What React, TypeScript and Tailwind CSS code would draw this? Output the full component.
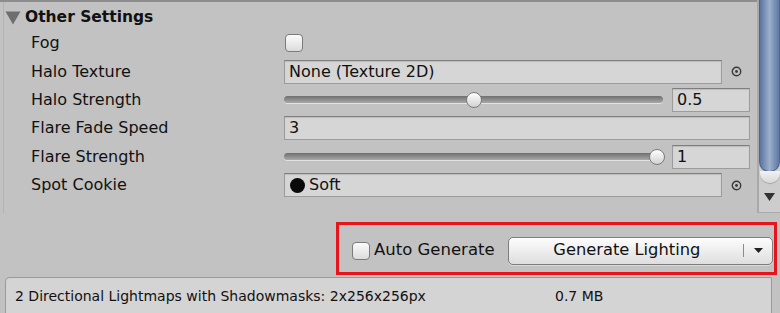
import React from "react";

const font = { fontFamily: '"DejaVu Sans", "Liberation Sans", sans-serif' };

function Field({ children, className = "" }: { children?: React.ReactNode; className?: string }) {
  return (
    <div
      className={
        "h-[24px] flex items-center pl-[4px] bg-[#d6d6d6] border border-[#9c9c9c] border-t-[#7e7e7e] shadow-[inset_0_1px_1px_rgba(0,0,0,0.12)] text-[16px] text-[#111] " +
        className
      }
    >
      {children}
    </div>
  );
}

function Picker() {
  return (
    <div className="w-[28px] flex items-center justify-center">
      <svg width="11" height="11" viewBox="0 0 11 11">
        <circle cx="5.5" cy="5.5" r="4.2" fill="none" stroke="#3a3a3a" strokeWidth="1.4" />
        <circle cx="5.5" cy="5.5" r="1.4" fill="#3a3a3a" />
      </svg>
    </div>
  );
}

function Slider({ pos, value }: { pos: number; value: string }) {
  return (
    <div className="flex items-center flex-1">
      <div className="relative w-[379px] h-[24px] flex items-center">
        <div className="w-full h-[7px] rounded-full bg-gradient-to-b from-[#6f6f6f] to-[#a9a9a9] shadow-[0_1px_0_#e2e2e2]" />
        <div
          className="absolute top-[4px] w-[16px] h-[16px] rounded-full border border-[#7a7a7a] bg-gradient-to-b from-[#ffffff] to-[#d2d2d2]"
          style={{ left: pos - 8 }}
        />
      </div>
      <Field className="ml-[9px] w-[78px]">{value}</Field>
    </div>
  );
}

function Checkbox({ className = "" }: { className?: string }) {
  return (
    <div
      className={
        "w-[18px] h-[18px] rounded-[4px] border border-[#7b7b7b] bg-gradient-to-b from-[#fbfbfb] to-[#dcdcdc] " + className
      }
    />
  );
}

function Row({ label, children }: { label: string; children: React.ReactNode }) {
  return (
    <div className="h-[28.4px] flex items-center">
      <div className="w-[280px] pl-[27px] text-[16px] text-[#111]">{label}</div>
      <div className="flex-1 flex items-center">{children}</div>
    </div>
  );
}

export default function App() {
  return (
    <div className="w-[780px] h-[313px] bg-[#c2c2c2] overflow-hidden relative" style={font}>
      <div className="flex h-[213px] border-t-2 border-[#8d8d8d]">
        <div className="flex-1 pr-[7px] border-l border-[#b3b3b3] ml-[3px]">
          <div className="h-[27px] flex items-center pt-[4px]">
            <svg width="16" height="15" viewBox="0 0 16 15" className="ml-[1px] mr-[4px]">
              <polygon points="0.5,1.5 15.5,1.5 8,14.5" fill="#6e6e6e" />
            </svg>
            <span className="font-bold text-[15.5px] text-[#111]">Other Settings</span>
          </div>
          <Row label="Fog">
            <Checkbox className="ml-[1px]" />
          </Row>
          <Row label="Halo Texture">
            <Field className="w-[438px]">None (Texture 2D)</Field>
            <Picker />
          </Row>
          <Row label="Halo Strength">
            <Slider pos={190} value="0.5" />
          </Row>
          <Row label="Flare Fade Speed">
            <Field className="flex-1">3</Field>
          </Row>
          <Row label="Flare Strength">
            <Slider pos={373} value="1" />
          </Row>
          <Row label="Spot Cookie">
            <Field className="w-[438px] pl-[5px]">
              <span className="w-[15px] h-[15px] rounded-full bg-[#0a0a0a] mr-[4px] inline-block" />
              Soft
            </Field>
            <Picker />
          </Row>
        </div>
        <div className="w-[24px] border-l-2 border-[#a9a9a9] bg-[#cdcdcd] flex flex-col items-center -mt-[2px]">
          <div className="w-[21px] h-[172px] rounded-b-[10px] bg-gradient-to-r from-[#5b74a0] via-[#9cb0cc] to-[#5f78a3] border border-[#4f6690] border-t-0" />
          <div className="w-[20px] h-[12px] -mt-[1px] rounded-b-[10px] bg-gradient-to-b from-[#f2f2f2] to-[#d8d8d8] shadow-[0_1px_1px_rgba(0,0,0,0.2)]" />
          <div className="mt-[10px]">
            <svg width="11" height="8" viewBox="0 0 11 8">
              <polygon points="0,0 11,0 5.5,8" fill="#333" />
            </svg>
          </div>
          <div className="flex-1" />
          <div className="w-full h-px bg-[#a9a9a9]" />
        </div>
      </div>

      <div className="flex justify-end mt-[9px] pr-[3px]">
        <div className="w-[441px] h-[53px] border-[3px] border-[#e8141b] flex items-center pt-[4px] pr-[1px]">
          <Checkbox className="ml-[13px]" />
          <span className="ml-[4px] text-[16.5px] text-[#111]">Auto Generate</span>
          <div className="ml-[13px] flex-1 h-[28px] rounded-[5px] border border-[#7d7d7d] bg-gradient-to-b from-[#fdfdfd] to-[#dedede] flex items-center shadow-[0_1px_0_rgba(255,255,255,0.4)]">
            <span className="flex-1 text-center text-[16.3px] text-[#111] pl-[2px]">Generate Lighting</span>
            <div className="w-px h-[13px] bg-[#8a8a8a]" />
            <div className="w-[28px] flex justify-center">
              <svg width="9" height="5" viewBox="0 0 9 5">
                <polygon points="0,0 9,0 4.5,5" fill="#222" />
              </svg>
            </div>
          </div>
        </div>
      </div>

      <div className="ml-[5px] mr-[8px] mt-[2px] h-[40px] rounded-tl-[5px] rounded-tr-[2px] border border-[#9a9a9a] border-b-0 bg-[#d4d4d4] flex items-center text-[14px] text-[#111] pl-[9px] pb-[3px]">
        <span className="w-[540px]">2 Directional Lightmaps with Shadowmasks: 2x256x256px</span>
        <span>0.7 MB</span>
      </div>
    </div>
  );
}
